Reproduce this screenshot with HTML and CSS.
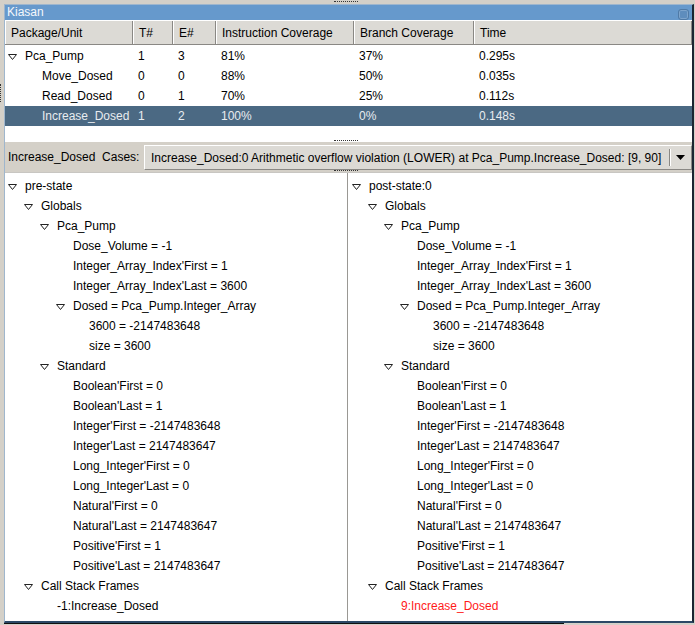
FILE: index.html
```html
<!DOCTYPE html>
<html>
<head>
<meta charset="utf-8">
<link rel="stylesheet" href="styles.css">
</head>
<body>
<div class="desk">
  <span class="grip grip-top"></span>
  <span class="grip grip-left"></span>
  <div class="window">
    <div class="titlebar">
      <span class="title">Kiasan</span>
      <span class="close"></span>
    </div>
    <div class="table-area">
      <div class="trow header">
        <div class="c c1">Package/Unit</div>
        <div class="c c2">T#</div>
        <div class="c c3">E#</div>
        <div class="c c4">Instruction Coverage</div>
        <div class="c c5">Branch Coverage</div>
        <div class="c c6">Time</div>
      </div>
      <div class="trow">
        <div class="c c1"><svg class="tri" width="9" height="6" viewBox="0 0 9 6"><polygon points="0.5,0.5 8.5,0.5 4.5,5.5"/></svg>Pca_Pump</div>
        <div class="c c2">1</div>
        <div class="c c3">3</div>
        <div class="c c4">81%</div>
        <div class="c c5">37%</div>
        <div class="c c6">0.295s</div>
      </div>
      <div class="trow">
        <div class="c c1 child">Move_Dosed</div>
        <div class="c c2">0</div>
        <div class="c c3">0</div>
        <div class="c c4">88%</div>
        <div class="c c5">50%</div>
        <div class="c c6">0.035s</div>
      </div>
      <div class="trow">
        <div class="c c1 child">Read_Dosed</div>
        <div class="c c2">0</div>
        <div class="c c3">1</div>
        <div class="c c4">70%</div>
        <div class="c c5">25%</div>
        <div class="c c6">0.112s</div>
      </div>
      <div class="trow selected">
        <div class="c c1 child">Increase_Dosed</div>
        <div class="c c2">1</div>
        <div class="c c3">2</div>
        <div class="c c4">100%</div>
        <div class="c c5">0%</div>
        <div class="c c6">0.148s</div>
      </div>
      <span class="grip grip-split1"></span>
    </div>
    <div class="toolbar">
      <span class="label">Increase_Dosed&nbsp; Cases:</span>
      <div class="combo">
        <span class="combo-text">Increase_Dosed:0 Arithmetic overflow violation (LOWER) at Pca_Pump.Increase_Dosed: [9, 90]</span>
        <span class="combo-btn"><svg width="9" height="5" viewBox="0 0 9 5"><polygon points="0,0 9,0 4.5,5" fill="#000"/></svg></span>
      </div>
      <span class="grip grip-split2"></span>
    </div>
    <div class="panes">
      <div class="pane left">
        <div class="node l0"><svg class="tri" width="9" height="6" viewBox="0 0 9 6"><polygon points="0.5,0.5 8.5,0.5 4.5,5.5"/></svg>pre-state</div>
        <div class="node l1"><svg class="tri" width="9" height="6" viewBox="0 0 9 6"><polygon points="0.5,0.5 8.5,0.5 4.5,5.5"/></svg>Globals</div>
        <div class="node l2"><svg class="tri" width="9" height="6" viewBox="0 0 9 6"><polygon points="0.5,0.5 8.5,0.5 4.5,5.5"/></svg>Pca_Pump</div>
        <div class="node leaf l3">Dose_Volume = -1</div>
        <div class="node leaf l3">Integer_Array_Index'First = 1</div>
        <div class="node leaf l3">Integer_Array_Index'Last = 3600</div>
        <div class="node l3"><svg class="tri" width="9" height="6" viewBox="0 0 9 6"><polygon points="0.5,0.5 8.5,0.5 4.5,5.5"/></svg>Dosed = Pca_Pump.Integer_Array</div>
        <div class="node leaf l4">3600 = -2147483648</div>
        <div class="node leaf l4">size = 3600</div>
        <div class="node l2"><svg class="tri" width="9" height="6" viewBox="0 0 9 6"><polygon points="0.5,0.5 8.5,0.5 4.5,5.5"/></svg>Standard</div>
        <div class="node leaf l3">Boolean'First = 0</div>
        <div class="node leaf l3">Boolean'Last = 1</div>
        <div class="node leaf l3">Integer'First = -2147483648</div>
        <div class="node leaf l3">Integer'Last = 2147483647</div>
        <div class="node leaf l3">Long_Integer'First = 0</div>
        <div class="node leaf l3">Long_Integer'Last = 0</div>
        <div class="node leaf l3">Natural'First = 0</div>
        <div class="node leaf l3">Natural'Last = 2147483647</div>
        <div class="node leaf l3">Positive'First = 1</div>
        <div class="node leaf l3">Positive'Last = 2147483647</div>
        <div class="node l1"><svg class="tri" width="9" height="6" viewBox="0 0 9 6"><polygon points="0.5,0.5 8.5,0.5 4.5,5.5"/></svg>Call Stack Frames</div>
        <div class="node leaf l2">-1:Increase_Dosed</div>
      </div>
      <div class="pane right">
        <div class="node l0"><svg class="tri" width="9" height="6" viewBox="0 0 9 6"><polygon points="0.5,0.5 8.5,0.5 4.5,5.5"/></svg>post-state:0</div>
        <div class="node l1"><svg class="tri" width="9" height="6" viewBox="0 0 9 6"><polygon points="0.5,0.5 8.5,0.5 4.5,5.5"/></svg>Globals</div>
        <div class="node l2"><svg class="tri" width="9" height="6" viewBox="0 0 9 6"><polygon points="0.5,0.5 8.5,0.5 4.5,5.5"/></svg>Pca_Pump</div>
        <div class="node leaf l3">Dose_Volume = -1</div>
        <div class="node leaf l3">Integer_Array_Index'First = 1</div>
        <div class="node leaf l3">Integer_Array_Index'Last = 3600</div>
        <div class="node l3"><svg class="tri" width="9" height="6" viewBox="0 0 9 6"><polygon points="0.5,0.5 8.5,0.5 4.5,5.5"/></svg>Dosed = Pca_Pump.Integer_Array</div>
        <div class="node leaf l4">3600 = -2147483648</div>
        <div class="node leaf l4">size = 3600</div>
        <div class="node l2"><svg class="tri" width="9" height="6" viewBox="0 0 9 6"><polygon points="0.5,0.5 8.5,0.5 4.5,5.5"/></svg>Standard</div>
        <div class="node leaf l3">Boolean'First = 0</div>
        <div class="node leaf l3">Boolean'Last = 1</div>
        <div class="node leaf l3">Integer'First = -2147483648</div>
        <div class="node leaf l3">Integer'Last = 2147483647</div>
        <div class="node leaf l3">Long_Integer'First = 0</div>
        <div class="node leaf l3">Long_Integer'Last = 0</div>
        <div class="node leaf l3">Natural'First = 0</div>
        <div class="node leaf l3">Natural'Last = 2147483647</div>
        <div class="node leaf l3">Positive'First = 1</div>
        <div class="node leaf l3">Positive'Last = 2147483647</div>
        <div class="node l1"><svg class="tri" width="9" height="6" viewBox="0 0 9 6"><polygon points="0.5,0.5 8.5,0.5 4.5,5.5"/></svg>Call Stack Frames</div>
        <div class="node leaf l2 red">9:Increase_Dosed</div>
      </div>
    </div>
  </div>
  <div class="bottom-strip">
    <span class="seg s1"></span><span class="seg s2"></span><span class="seg s3"></span><span class="seg s4"></span>
  </div>
</div>
</body>
</html>
```

FILE: styles.css
```css
* { box-sizing: border-box; }
html, body {
  margin: 0;
  padding: 0;
  width: 695px;
  height: 625px;
  overflow: hidden;
  background: #d4d0c8;
  font-family: "Liberation Sans", Arial, sans-serif;
  font-size: 12px;
  color: #000;
}
.desk {
  position: relative;
  width: 695px;
  height: 625px;
  padding: 4px 0 0 4px;
}
.grip {
  position: absolute;
  height: 2px;
  border-top: 1px dotted #333;
}
.grip-top { left: 334px; top: 1px; width: 24px; }
.grip-left {
  left: 0; top: 84px; width: 2px; height: 18px;
  border-top: none; border-left: 1px dotted #333;
}
.grip-split1 { left: 329px; bottom: 0; width: 24px; }
.grip-split2 { left: 329px; bottom: 0; width: 24px; }

.window {
  width: 690px;
  height: 619px;
  border-top: 1px solid #9fb6cd;
  border-left: 1px solid #9fb6cd;
  border-right: 2px solid #1b2632;
  border-bottom: 2px solid #2b4866;
  display: flex;
  flex-direction: column;
  background: #fff;
}
.titlebar {
  height: 15px;
  flex: none;
  background: #6699cc;
  color: #f4f7fb;
  display: flex;
  align-items: center;
  justify-content: space-between;
  padding: 0 3px 0 2px;
  line-height: 15px;
}
.title { font-size: 12px; }
.close {
  width: 11px;
  height: 11px;
  margin-top: 3px;
  border-radius: 3px;
  background: #5e8dbd;
  border: 1px solid #4f7aa6;
  box-shadow: inset 0 0 0 1px #7da4cc;
}

.table-area {
  position: relative;
  height: 122px;
  flex: none;
  background: #fff;
  border-top: 1px solid #fff;
}
.trow {
  display: flex;
  height: 20px;
  align-items: center;
  white-space: nowrap;
}
.trow.header {
  height: 24px;
  margin-bottom: 1px;
  background: #dcdad5;
  border-bottom: 1px solid #8a8884;
}
.trow.header .c {
  height: 100%;
  display: flex;
  align-items: center;
  border-left: 1px solid #fff;
  border-right: 1px solid #8a8884;
  padding-left: 5px;
}
.trow.header .c1 { padding-left: 5px; }
.c { flex: none; padding-left: 4px; }
.c1 { width: 128px; display: flex; align-items: center; padding-left: 3px; }
.c1.child { padding-left: 37px; }
.c2 { width: 40px; }
.c3 { width: 43px; }
.c4 { width: 138px; }
.c5 { width: 120px; }
.c6 { flex: 1; }
.trow .c2, .trow .c3, .trow .c4, .trow .c5, .trow .c6 { padding-left: 5px; }
.trow.selected {
  background: #4b6983;
  color: #e8ecf0;
}
.tri {
  flex: none;
  margin-right: 8px;
  margin-top: 1px;
}
.tri polygon {
  fill: none;
  stroke: #222;
  stroke-width: 1;
}

.toolbar {
  position: relative;
  flex: none;
  height: 30px;
  background: #d4d0c8;
  display: flex;
  align-items: flex-end;
  padding: 0 0 2px 3px;
}
.label {
  white-space: nowrap;
  width: 136px;
  flex: none;
  line-height: 25px;
}
.combo {
  flex: 1;
  height: 25px;
  display: flex;
  align-items: center;
  background: #dcdad5;
  border-top: 1px solid #fff;
  border-left: 1px solid #fff;
  border-bottom: 1px solid #8a8884;
  border-right: 1px solid #8a8884;
  padding-left: 6px;
}
.combo-text {
  flex: 1;
  white-space: nowrap;
  overflow: hidden;
}
.combo-btn {
  flex: none;
  width: 20px;
  height: 17px;
  display: flex;
  align-items: center;
  justify-content: center;
  border-left: 1px solid #fff;
  box-shadow: -1px 0 0 #8a8884;
  margin-right: 1px;
}

.panes {
  flex: 1;
  display: flex;
  background: #fff;
  border-top: 1px solid #c8c6c2;
}
.pane {
  padding-top: 3px;
  overflow: hidden;
}
.pane.left {
  width: 343px;
  border-right: 1px solid #9a9894;
}
.pane.right {
  flex: 1;
  padding-left: 1px;
}
.node {
  height: 20px;
  display: flex;
  align-items: center;
  white-space: nowrap;
}
.node.l0 { padding-left: 3px; }
.node.l1 { padding-left: 19px; }
.node.l2 { padding-left: 35px; }
.node.l3 { padding-left: 51px; }
.node.l4 { padding-left: 67px; }
.node.leaf.l2 { padding-left: 52px; }
.node.leaf.l3 { padding-left: 68px; }
.node.leaf.l4 { padding-left: 84px; }
.red { color: #ff1a1a; }

.bottom-strip {
  position: relative;
  height: 2px;
  border-top: 1px solid #111;
  width: 560px;
}
.seg {
  display: inline-block;
}
```
